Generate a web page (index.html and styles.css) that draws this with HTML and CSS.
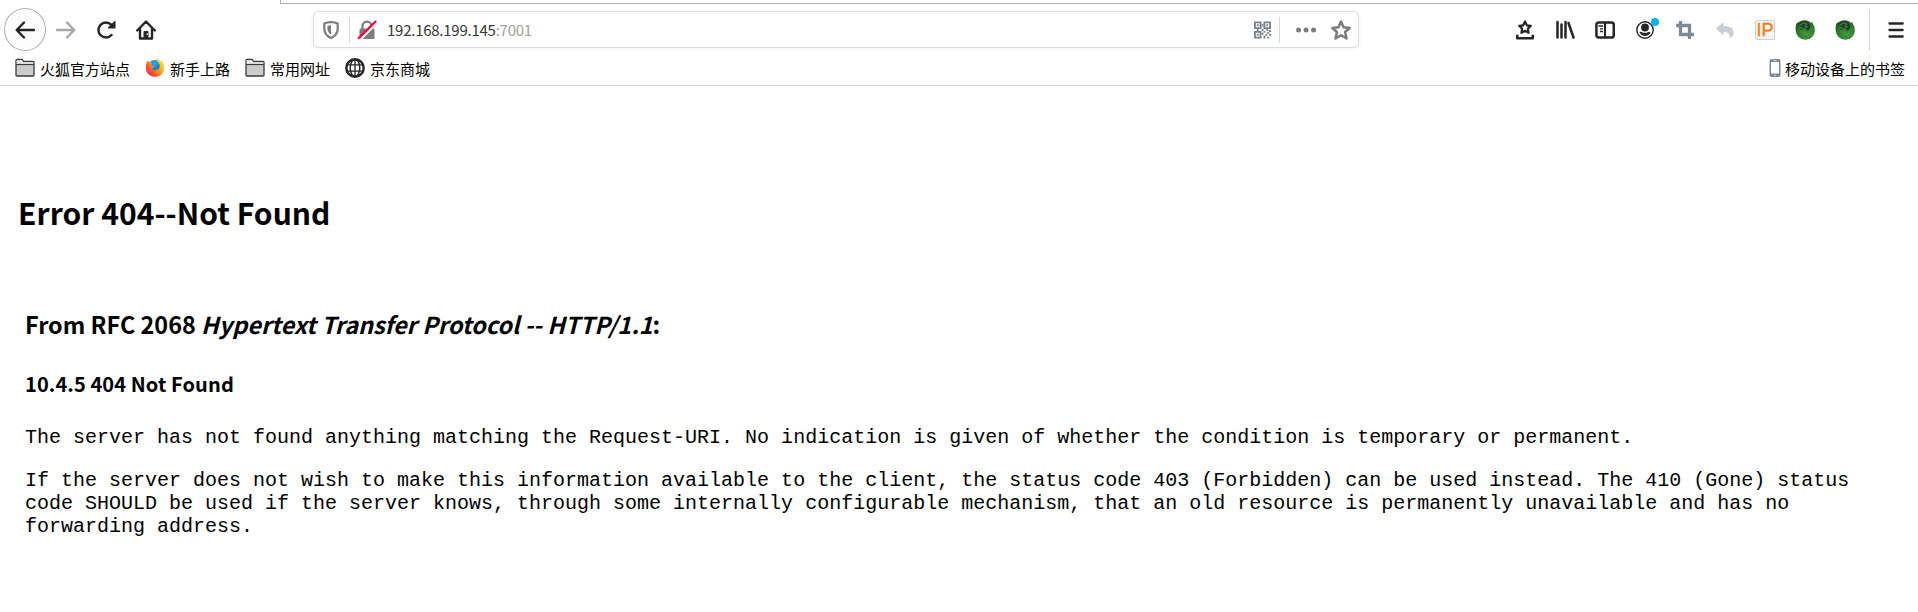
FILE: index.html
```html
<!DOCTYPE html>
<html lang="zh-CN">
<head>
<meta charset="utf-8">
<title>Error 404--Not Found</title>
<link rel="stylesheet" href="styles.css">
</head>
<body>
<svg class="defs" aria-hidden="true">
  <defs>
    <linearGradient id="ffOuter" x1="1" y1="0" x2="0" y2="1"><stop offset="0" stop-color="#fff23f"/><stop offset=".4" stop-color="#ffb01c"/><stop offset=".7" stop-color="#ff5130"/><stop offset="1" stop-color="#e61587"/></linearGradient>
    <radialGradient id="ffBlue" cx=".5" cy=".2" r=".8"><stop offset="0" stop-color="#18b5fa"/><stop offset=".6" stop-color="#0b63dd"/><stop offset="1" stop-color="#2a2a9c"/></radialGradient>
    <radialGradient id="greenBall" cx=".6" cy=".7" r=".7"><stop offset="0" stop-color="#43983f"/><stop offset=".65" stop-color="#2d7c2b"/><stop offset="1" stop-color="#215724"/></radialGradient>
    <symbol id="folder" viewBox="0 0 20 20"><path d="M1 17V2.5Q1 1.5 2 1.5H6.5Q7.5 1.5 8 2.5L8.5 3.500H18Q19 3.500 19 4.500V17Q19 18 18 18H2Q1 18 1 17Z" fill="#ccc" stroke="#3b3b3b" stroke-width="1.300"/><path d="M1.700 6V2.200H7L8 4.200H18.300V6Z" fill="#eee"/><path d="M1 6.500H19" stroke="#3b3b3b" stroke-width="1.200"/></symbol>
    <symbol id="greenfox" viewBox="0 0 20 20"><path d="M2 2.500Q3 3 4 2Q7-.3 12 .6Q14.500 1.200 16 3L17.500 1.500Q17 3.500 18.500 5Q20 7 19.800 10.500A9.500 9 0 0 1 .8 11Q0 6 2 2.500Z" fill="url(#greenBall)"/><path d="M4 3.500Q9 .5 14 3Q16 5 15 8Q14 10.500 11 12Q12.500 9.500 11 8.500Q8 11 5 9L8 8Q5 7 4 3.500Z" fill="#1d4028"/><path d="M5 5Q8 2 12 4L10 6 13 7M7 9Q9 10 11 7" fill="none" stroke="#518052" stroke-width="1"/></symbol>
  </defs>
</svg>
<header class="browser">
  <div class="tabline"></div>
  <nav class="toolbar">
    <button class="back" aria-label="Back"><svg class="icon" viewBox="0 0 20 20"><path d="M19 10H2M9 2.500 1.700 10 9 17.500" fill="none" stroke="#262626" stroke-width="2.400" stroke-linecap="round" stroke-linejoin="round"/></svg></button>
    <svg class="icon forward" viewBox="0 0 20 20"><path d="M1 10H18M11 2.500 18.300 10 11 17.500" fill="none" stroke="#a8a8a8" stroke-width="2.400" stroke-linecap="round" stroke-linejoin="round"/></svg>
    <svg class="icon reload" viewBox="0 0 20 20"><path d="M15.500 15A7.500 7.500 0 1 1 15.200 4.600" fill="none" stroke="#262626" stroke-width="2.500" stroke-linecap="round"/><path d="M19.500 1V8.500H12Q11.500 8 12 7.500L18.500 1Q19 .4 19.500 1Z" fill="#262626"/></svg>
    <svg class="icon home" viewBox="0 0 20 20"><path d="M1.200 10.500 10 1.500 18.800 10.500M4 8.500V18.500H16V8.500" fill="none" stroke="#262626" stroke-width="2.400" stroke-linecap="round" stroke-linejoin="round"/><path d="M7.500 18.500V12Q7.500 11 8.500 11H11.500Q12.500 11 12.500 12V18.500Z" fill="#262626"/><path d="M10.600 14.200H12" stroke="#fff" stroke-width="1.200"/></svg>
    <div class="urlbar">
      <svg class="icon shield" viewBox="0 0 20 20"><path d="M10 2Q14 2.200 16.700 3.600V8.500Q16.700 15 10 18.100Q3.300 15 3.300 8.500V3.600Q6 2.200 10 2Z" fill="none" stroke="#7c7c7c" stroke-width="2.200" stroke-linejoin="round"/><path d="M10 5.200Q7.500 5.400 6.400 5.900V8.500Q6.400 12.500 10 14.600Z" fill="#7c7c7c"/></svg>
      <i class="rule"></i>
      <svg class="icon lock" viewBox="0 0 20 20"><path d="M5.500 9V6.200A4.500 4.500 0 0 1 14.500 6.200V9" fill="none" stroke="#7c7c7c" stroke-width="2.300"/><rect x="2.500" y="8.500" width="15" height="10.500" rx="1.500" fill="#7c7c7c"/><path d="M3.300 20 19.500 3.400" stroke="#fff" stroke-width="2"/><path d="M1.800 18 18.500 1.500" stroke="#ff0039" stroke-width="2.300" stroke-linecap="round"/></svg>
      <span class="address">192.168.199.145<span class="port">:7001</span></span>
      <svg class="icon qr" viewBox="0 0 20 20"><g fill="none" stroke="#7b858f" stroke-width="2"><path d="M2 2H8V8H2ZM12 2H18V8H12ZM2 12H8V18H2Z"/></g><g fill="#7b858f"><path d="M4 4h2v2H4zM14 4h2v2h-2zM4 14h2v2H4zM9 4h2v2H9zM4 9h2v2H4zM9 9h2v2H9zM14 9h2v2h-2zM11 11h2v2h-2zM15 12h2v2h-2zM17 10h2v2h-2zM9 13h2v2H9zM13 14h2v2h-2zM17 14h2v2h-2zM11 16h2v3h-2zM15 17h2v2h-2z"/></g></svg>
      <i class="rule rule-end"></i>
      <svg class="icon dots" viewBox="0 0 20 20"><g fill="#7c7c7c"><circle cx="2.500" cy="10" r="2.500"/><circle cx="10" cy="10" r="2.500"/><circle cx="17.500" cy="10" r="2.500"/></g></svg>
      <svg class="icon star" viewBox="0 0 20 20"><path d="M10 1.500 12.500 7.200 18.700 8 14.100 12 15.500 18.500 10 15.200 4.500 18.500 5.900 12 1.300 8 7.500 7.200Z" fill="none" stroke="#7c7c7c" stroke-width="2.500" stroke-linejoin="round"/></svg>
    </div>
    <div class="actions">
      <svg class="icon" viewBox="0 0 20 20"><path d="M10 1.500 11.800 5.300 15.800 5.800 12.900 8.600 13.600 12.700 10 10.700 6.400 12.700 7.100 8.600 4.200 5.800 8.200 5.300Z" fill="none" stroke="#262626" stroke-width="2.200" stroke-linejoin="round"/><path d="M2.200 15.800V18.300H17.800V15.800" fill="none" stroke="#262626" stroke-width="2.600" stroke-linecap="round" stroke-linejoin="round"/></svg>
      <svg class="icon" viewBox="0 0 20 20"><path d="M2.500 2V17.500M6.500 4.500V17.500M10.500 2V17.500M13.500 3 18.500 17.500" fill="none" stroke="#262626" stroke-width="2.500" stroke-linecap="round"/></svg>
      <svg class="icon" viewBox="0 0 20 20"><rect x="1.400" y="2.400" width="17.400" height="15.200" rx="2.500" fill="none" stroke="#262626" stroke-width="2.500"/><path d="M10 3V17" stroke="#262626" stroke-width="2"/><path d="M3.500 6H8M5 8.800H8M5 11.500H8" stroke="#262626" stroke-width="1.300"/></svg>
      <span class="account"><svg class="icon" viewBox="0 0 20 20"><circle cx="10" cy="10" r="8.200" fill="#fff" stroke="#262626" stroke-width="1.400"/><circle cx="10" cy="7.500" r="3.900" fill="#262626"/><path d="M4.500 12.300Q5.200 11.500 6.500 11.900Q10 13.800 13.500 11.900Q14.800 11.500 15.500 12.300Q14 16 10 16Q6 16 4.500 12.300Z" fill="#262626"/></svg><i class="badge"></i></span>
      <svg class="icon" viewBox="0 0 20 20"><path d="M5.500 1V14.500H19M1 5.500H14.500V19" fill="none" stroke="#7d8a98" stroke-width="3.300"/></svg>
      <svg class="icon" viewBox="0 0 20 20"><path d="M1 8.500 8.500 2V6Q18.800 6 18.800 13Q18.800 16.500 14.500 18Q15.500 11.800 8.500 12V15.500Z" fill="#c9ced4"/></svg>
      <span class="ip">IP</span>
      <svg class="icon"><use href="#greenfox"/></svg>
      <svg class="icon"><use href="#greenfox"/></svg>
    </div>
    <i class="rule rule-menu"></i>
    <svg class="icon menu" viewBox="0 0 20 20"><path d="M3.500 3.500H16.700M3.500 10H16.700M3.500 16.500H16.700" stroke="#262626" stroke-width="2.300" stroke-linecap="round"/></svg>
  </nav>
  <div class="bookmarks">
    <a class="bookmark"><svg class="icon"><use href="#folder"/></svg><span>火狐官方站点</span></a>
    <a class="bookmark"><svg class="icon" viewBox="0 0 20 20"><circle cx="10" cy="10" r="8" fill="url(#ffBlue)"/><path d="M12 .1Q13.500 2.300 15 3.300Q16 3.800 16.500 2.300Q19.300 5.300 19.200 9.800A9.200 9 0 0 1 .8 10.300Q.5 5.300 3 2.300L4 4.300Q5.500 3.600 7 4.300Q5.800 6.800 8 7.800L10 8.100Q8.500 9.800 7 10.300Q8 12.300 11 11.800Q14.500 11.600 14.800 8.300Q14.800 5.800 12.500 3.800Q11 2.300 12 .1Z" fill="url(#ffOuter)"/></svg><span>新手上路</span></a>
    <a class="bookmark"><svg class="icon"><use href="#folder"/></svg><span>常用网址</span></a>
    <a class="bookmark"><svg class="icon" viewBox="0 0 20 20"><g fill="none" stroke="#262626"><circle cx="10" cy="10" r="8.700" stroke-width="2.400"/><ellipse cx="10" cy="10" rx="4.800" ry="8.500" stroke-width="1.500"/><path d="M10 1V19M2 6.800H18M2 13.200H18" stroke-width="1.300"/></g></svg><span>京东商城</span></a>
    <a class="bookmark mobile"><svg class="phone" viewBox="0 0 12 20"><rect x=".5" y="1" width="11" height="18" rx="2" fill="#7d8a98"/><path d="M2 4H10V15.500H2Z" fill="#fff"/><path d="M4.500 2.500H7.500M5 17.300H7" stroke="#cbd2d8"/></svg><span>移动设备上的书签</span></a>
  </div>
</header>
<main class="page">
  <h2>Error 404--Not Found</h2>
  <section class="details">
    <h3>From RFC 2068 <i>Hypertext Transfer Protocol -- HTTP/1.1</i>:</h3>
    <h4>10.4.5 404 Not Found</h4>
    <p>The server has not found anything matching the Request-URI. No indication is given of whether the condition is temporary or permanent.</p>
    <p>If the server does not wish to make this information available to the client, the status code 403 (Forbidden) can be used instead. The 410 (Gone) status code SHOULD be used if the server knows, through some internally configurable mechanism, that an old resource is permanently unavailable and has no forwarding address.</p>
  </section>
</main>
</body>
</html>
```

FILE: styles.css
```css
* { box-sizing: border-box; }
body {
  margin: 0;
  background: #fff;
  color: #000;
  font-family: "Noto Sans CJK SC", sans-serif;
  overflow: hidden;
}
.defs { position: absolute; width: 0; height: 0; }
.browser { height: 86px; border-bottom: 1px solid #d9d9db; }
.tabline { height: 4px; margin-left: 280px; border-left: 1px solid #aeaeb0; border-bottom: 1px solid #aeaeb0; }
.toolbar { height: 51px; display: flex; align-items: center; padding-left: 4px; }
.icon { display: block; width: 20px; height: 20px; flex: none; }
.back {
  width: 42px; height: 43px; padding: 0; flex: none;
  display: flex; align-items: center; justify-content: center;
  border: 1px solid #b1b1b3; border-radius: 50%; background: #fdfdfd;
}
.forward { margin-left: 10px; }
.reload { margin-left: 20px; }
.home { margin-left: 20px; }
.urlbar {
  width: 1046px; height: 37px; margin-left: 157px; padding: 0 7px 0 7px; flex: none;
  display: flex; align-items: center;
  border: 1px solid #dcdcdf; border-radius: 5px; background: #fff;
  box-shadow: 0 1px 4px rgba(0, 0, 0, .06);
}
.rule { display: block; width: 1px; height: 26px; background: #d7d7db; flex: none; }
.urlbar .rule { margin-left: 8px; }
.lock { margin-left: 7px; }
.address {
  margin-left: 10px; flex: 1;
  font-size: 15px; line-height: 22px; letter-spacing: -.25px; color: #383838; white-space: nowrap;
}
.port { color: #a0a0a0; }
.qr { width: 19px; }
.urlbar .rule-end { margin-left: 7px; }
.dots { margin-left: 16px; }
.star { margin-left: 15px; }
.actions { display: flex; align-items: center; gap: 20px; margin-left: 156px; }
.account { position: relative; }
.badge { position: absolute; right: -4px; top: -2px; width: 8px; height: 8px; border-radius: 50%; background: #00b3f4; }
.ip {
  width: 20px; height: 20px; border: 1px solid #cfcfcf; border-radius: 2px; background: #f5f5f5;
  color: #ff7b08; font: 18px/19px "Liberation Sans", Arial, sans-serif; text-align: center; white-space: nowrap;
  -webkit-text-stroke: .3px #ff7b08;
}
.rule-menu { height: 42px; margin-left: 14px; }
.menu { margin-left: 16px; }
.bookmarks { height: 30px; display: flex; align-items: center; gap: 15px; padding: 0 13px 4px 15px; }
.bookmark { display: flex; align-items: center; gap: 5px; font-size: 15px; line-height: 22px; white-space: nowrap; }
.bookmark span { position: relative; top: 1px; }
.mobile { margin-left: auto; gap: 4px; }
.phone { width: 12px; height: 20px; }
.page { font-size: 20px; padding: 104px 25px 0 18px; }
h2, h3, h4, p { margin: 0; }
h2 { font-size: 30px; line-height: 44px; letter-spacing: .05px; }
.details { padding: 72px 30px 0 7px; }
h3 { font-size: 23.4px; line-height: 36px; }
h4 { font-size: 20px; line-height: 30px; margin-top: 27px; letter-spacing: .1px; }
p { font-family: "Liberation Mono", monospace; font-size: 20px; line-height: 23px; margin-top: 20px; }
h4 + p { margin-top: 27px; }
```
